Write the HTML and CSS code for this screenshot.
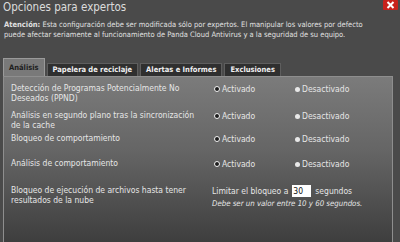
FILE: index.html
```html
<!DOCTYPE html>
<html>
<head>
<meta charset="utf-8">
<link rel="stylesheet" href="styles.css">
</head>
<body>
<div class="dlg">
  <div class="head">
    <div class="title">Opciones para expertos</div>
    <div class="close"><svg width="15" height="10" viewBox="0 0 15 10"><rect x="0" y="0" width="15" height="10" rx="1" fill="#c8221c"/><path d="M4.5 2 L10.5 8 M10.5 2 L4.5 8" stroke="#fff" stroke-width="2"/></svg></div>
  </div>
  <p class="warn"><b>Atención:</b> Esta configuración debe ser modificada sólo por expertos. El manipular los valores por defecto puede afectar seriamente al funcionamiento de Panda Cloud Antivirus y a la seguridad de su equipo.</p>
  <div class="tabs">
    <div class="tab active">Análisis</div>
    <div class="tab">Papelera de reciclaje</div>
    <div class="tab">Alertas e Informes</div>
    <div class="tab">Exclusiones</div>
  </div>
  <div class="panel">
    <div class="row r1">
      <div class="label">Detección de Programas Potencialmente No Deseados (PPND)</div>
      <div class="opt"><span class="radio on"></span>Activado</div>
      <div class="opt"><span class="radio"></span>Desactivado</div>
    </div>
    <div class="row r2">
      <div class="label">Análisis en segundo plano tras la sincronización de la cache</div>
      <div class="opt"><span class="radio on"></span>Activado</div>
      <div class="opt"><span class="radio"></span>Desactivado</div>
    </div>
    <div class="row r3">
      <div class="label">Bloqueo de comportamiento</div>
      <div class="opt"><span class="radio on"></span>Activado</div>
      <div class="opt"><span class="radio"></span>Desactivado</div>
    </div>
    <div class="row r4">
      <div class="label">Análisis de comportamiento</div>
      <div class="opt"><span class="radio on"></span>Activado</div>
      <div class="opt"><span class="radio"></span>Desactivado</div>
    </div>
    <div class="row r5">
      <div class="label">Bloqueo de ejecución de archivos hasta tener resultados de la nube</div>
      <div class="limit">
        <div class="lim-line">Limitar el bloqueo a <span class="inp">30</span> segundos</div>
        <div class="hint">Debe ser un valor entre 10 y 60 segundos.</div>
      </div>
    </div>
  </div>
</div>
</body>
</html>
```
FILE: styles.css
```css
html, body {
  margin: 0;
  padding: 0;
  background: #4a4a4a;
  width: 400px;
  height: 242px;
  overflow: hidden;
  font-family: "DejaVu Sans Condensed", "DejaVu Sans", sans-serif;
  font-stretch: condensed;
  color: #e6e6e6;
}
.dlg {
  display: flex;
  flex-direction: column;
  height: 242px;
}
.head {
  display: flex;
  justify-content: space-between;
  align-items: flex-start;
  height: 18px;
}
.title {
  font-size: 11.5px;
  line-height: 14px;
  padding-left: 3px;
  color: #dcdcdc;
}
.close {
  margin-right: 2px;
  line-height: 0;
}
.warn {
  margin: 2px 0 0 4px;
  width: 374px;
  font-size: 7.5px;
  line-height: 10px;
  color: #e0e0e0;
}
.tabs {
  display: flex;
  align-items: flex-end;
  margin: 18px 0 0 3px;
  height: 18px;
  gap: 2px;
}
.tab {
  background: #2f2f2f;
  border: 1px solid #5e5e5e;
  border-bottom: none;
  font-size: 7.5px;
  font-weight: bold;
  color: #f0f0f0;
  height: 12px;
  line-height: 12px;
  padding: 0 5px;
}
.tab.active {
  background: #797979;
  border-color: #9a9a9a;
  color: #1e1e1e;
  height: 17px;
  line-height: 18px;
}
.panel {
  margin-left: 3px;
  width: 390px;
  flex: 1;
  border: 1px solid #8e8e8e;
  border-bottom: none;
  background: linear-gradient(#7b7b7b, #656565 45%, #3e3e3e);
  padding-top: 6px;
  box-sizing: border-box;
}
.row {
  display: flex;
  align-items: flex-start;
  font-size: 8.5px;
  line-height: 10px;
}
.r1 { height: 27px; }
.r2 { height: 23px; }
.r3 { height: 25px; }
.r4 { height: 27px; }
.label {
  width: 196px;
  padding-left: 7px;
  box-sizing: border-box;
}
.opt {
  display: flex;
  align-items: center;
  width: 81px;
  padding-left: 14px;
  box-sizing: border-box;
  padding-top: 1px;
}
.radio {
  width: 5px;
  height: 5px;
  border-radius: 50%;
  background: #e8e8e8;
  margin-right: 2px;
  box-sizing: border-box;
}
.radio.on {
  width: 6px;
  height: 6px;
  background: #1c1c1c;
  border: 1.5px solid #f4f4f4;
}
.limit {
  padding-left: 12px;
}
.lim-line {
  display: flex;
  align-items: center;
}
.inp {
  display: inline-block;
  width: 19px;
  height: 12px;
  background: #fff;
  color: #111;
  line-height: 12px;
  padding-left: 1px;
  margin: 0 4px 0 4px;
  box-sizing: border-box;
}
.hint {
  font-style: italic;
  font-size: 7.8px;
  margin-top: 2px;
}
```
